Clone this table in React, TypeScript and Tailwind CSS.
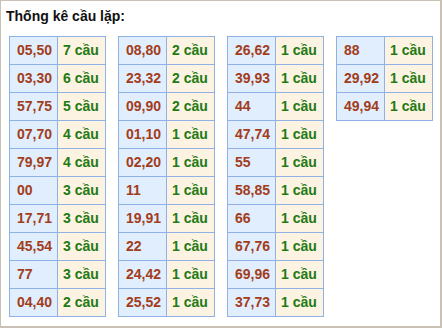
import React from "react";

const columns: [string, number][][] = [
  [
    ["05,50", 7],
    ["03,30", 6],
    ["57,75", 5],
    ["07,70", 4],
    ["79,97", 4],
    ["00", 3],
    ["17,71", 3],
    ["45,54", 3],
    ["77", 3],
    ["04,40", 2],
  ],
  [
    ["08,80", 2],
    ["23,32", 2],
    ["09,90", 2],
    ["01,10", 1],
    ["02,20", 1],
    ["11", 1],
    ["19,91", 1],
    ["22", 1],
    ["24,42", 1],
    ["25,52", 1],
  ],
  [
    ["26,62", 1],
    ["39,93", 1],
    ["44", 1],
    ["47,74", 1],
    ["55", 1],
    ["58,85", 1],
    ["66", 1],
    ["67,76", 1],
    ["69,96", 1],
    ["37,73", 1],
  ],
  [
    ["88", 1],
    ["29,92", 1],
    ["49,94", 1],
  ],
];

const StatTable: React.FC<{ rows: [string, number][] }> = ({ rows }) => (
  <table className="w-[97px] table-fixed border-collapse self-start">
    <tbody>
      {rows.map(([pair, count]) => (
        <tr key={pair} className="h-[28px]">
          <td className="w-[48px] border border-[#8fb1e6] bg-[#e0eefd] pl-[7px] text-[#a23d1c]">
            {pair}
          </td>
          <td className="border border-[#8fb1e6] bg-[#fdf3e2] pl-[5px] text-[#237a14]">
            {count} cầu
          </td>
        </tr>
      ))}
    </tbody>
  </table>
);

const App: React.FC = () => {
  return (
    <div
      className="h-[328px] w-[442px] border border-r-2 border-b-2 border-[#c9c1b3] bg-white"
      style={{ fontFamily: '"Liberation Sans", Arial, sans-serif' }}
    >
      <div className="pl-[5px] pt-[6px] text-[14px] leading-[18px] font-bold text-[#111]">
        Thống kê cầu lặp:
      </div>
      <div className="mt-[11px] flex gap-[12px] pl-[8px] text-[14px] font-bold">
        {columns.map((rows, i) => (
          <StatTable key={i} rows={rows} />
        ))}
      </div>
    </div>
  );
};

export default App;
